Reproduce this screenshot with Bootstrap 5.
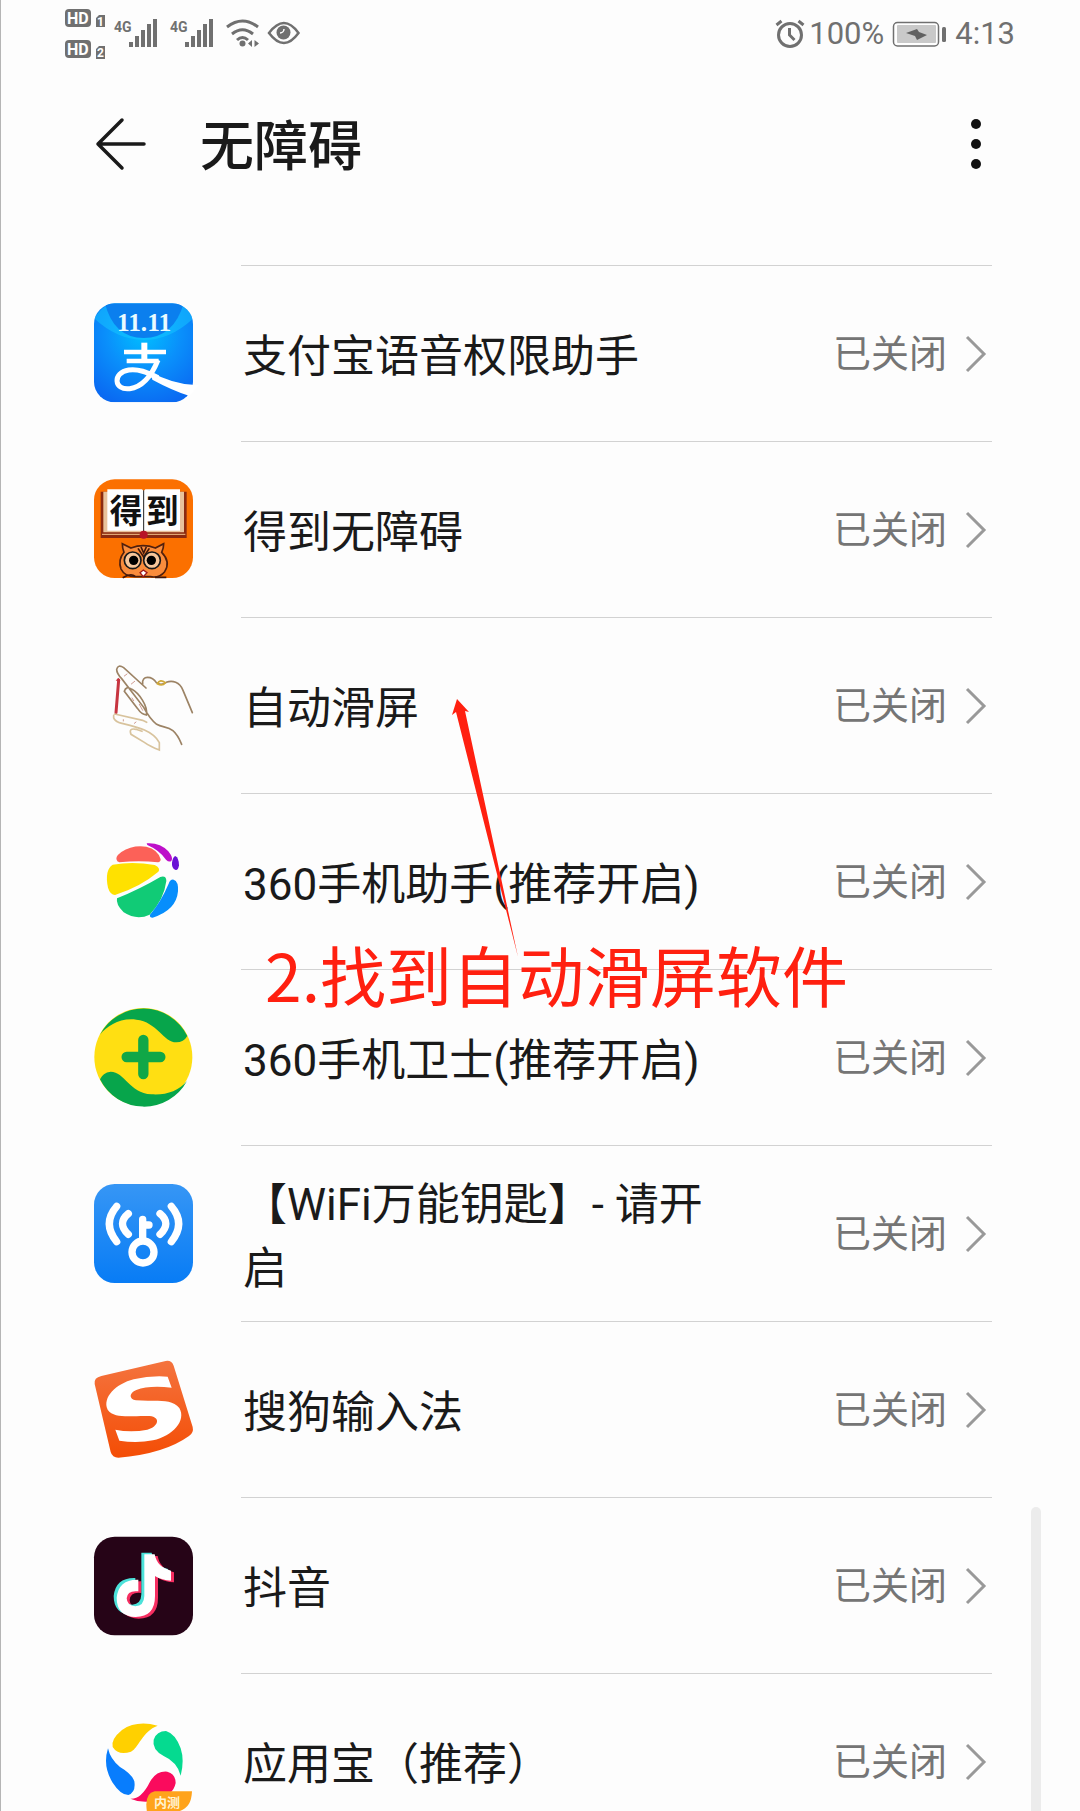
<!DOCTYPE html>
<html lang="zh-CN">
<head>
<meta charset="utf-8">
<meta name="viewport" content="width=device-width, initial-scale=1">
<title>无障碍</title>
<link href="https://cdn.jsdelivr.net/npm/bootstrap@5.3.0/dist/css/bootstrap.min.css" rel="stylesheet">
<style>
body { font-family: Roboto, "Noto Sans CJK SC", sans-serif; color: #1a1a1a; background: #fdfdfd; }
.screen { border-left: 1px solid #b5b5b5; }
.statusbar { height: 66px; padding: 0 65px 0 64px; color: #707070; font-size: 31px; line-height: 66px; }
.status-right { padding-top: 2px; }
.statusbar .clock { margin-left: 7px; }
.titlebar { height: 156px; padding: 0 87px 0 94px; }
.titlebar h1 { font-size: 54px; line-height: 80px; font-weight: 500; margin-left: 53px; padding-top: 8px; }
.titlebar .btn { line-height: 0; }
.services { margin-top: 43px; padding: 0 88px 0 93px; }
.service { height: 177px; margin-bottom: -1px; color: #1a1a1a; gap: 48px; }
.app-icon { width: 99px; height: 99px; overflow: visible; }
.service-body { border-top: 1px solid #d2d2d2; padding-left: 2px; }
.service-name { font-size: 44px; line-height: 64px; margin-right: 108px; padding-top: 5px; }
.service-state { font-size: 38px; line-height: 64px; color: #757575; gap: 18px; padding-right: 5px; }
.scroll-thumb { right: 39px; top: 1507px; bottom: 0; width: 10px; background: #ececec; border-radius: 5px 5px 0 0; }
.note-text { left: 264px; top: 925px; font: 66px/96px "Noto Sans CJK SC", sans-serif; color: #ff2010; }
.note-arrow { left: 440px; top: 690px; }
</style>
<script src="https://cdn.jsdelivr.net/npm/bootstrap@5.3.0/dist/js/bootstrap.bundle.min.js"></script>
</head>
<body>
<div class="screen position-relative vh-100 overflow-hidden">
  <div class="statusbar d-flex align-items-center justify-content-between">
    <svg width="240" height="66" viewBox="65 0 240 66" fill="#707070" font-family="Roboto, sans-serif" font-weight="700" role="img" aria-label="信号">
      <rect x="65" y="9" width="26" height="18" rx="4"/><rect x="65" y="40" width="26" height="18" rx="4"/>
      <g fill="#fff" font-size="16"><text x="67" y="24">HD</text><text x="67" y="55">HD</text></g>
      <path d="M96 18l3-3h6v12h-9zM96 49l3-3h6v13h-9z"/>
      <g fill="#fff" font-size="12"><text x="97" y="26">1</text><text x="97" y="57">2</text></g>
      <g id="bars"><text x="114" y="32" font-size="14">4G</text>
      <path d="M129 42h4v5h-4zM135 36h4v11h-4zM141 30h4v17h-4zM147 24h4v23h-4zM153 19h4v28h-4z"/></g>
      <use href="#bars" x="56"/>
      <g fill="none" stroke="#707070" stroke-width="3"><path d="M227 27q15.500-12 31 0M232 34q10.500-8.500 21 0M237 40q5.500-5 11 0"/>
      <path stroke-width="2.500" d="M269 33q15-20 29.500 0q-14.500 20-29.500 0z"/></g>
      <circle cx="242.500" cy="43.500" r="3"/><path d="M248 43.500l4-3.500v7zM259 43.500l-4.500-3.500v7z"/>
      <circle cx="283.500" cy="32.500" r="7"/><path d="M284 29a4 4 0 0 1-4 4" fill="none" stroke="#fff" stroke-width="1.500"/>
    </svg>
    <div class="status-right d-flex align-items-center">
      <svg class="me-1" width="30" height="30" viewBox="776 18 30 30" fill="none" stroke="#707070" stroke-width="3" aria-hidden="true"><circle cx="791" cy="34" r="11.500"/><path d="M790.500 27v7l5 5M777.500 24l5-4M804.500 24l-5-4"/></svg>
      <span>100%</span>
      <svg class="ms-2" width="56" height="28" viewBox="893 19 56 28" aria-hidden="true"><rect x="894.500" y="21.500" width="45" height="23.500" rx="4" fill="#fff" stroke="#707070" stroke-width="1.500"/><rect x="898" y="24" width="39" height="18" rx="1" fill="#c9c9c9"/><path d="M907 32l11-4 2 3 8 3-10 5-2-4z" fill="#606060"/><rect x="943" y="26" width="4" height="15" rx="1.500" fill="#707070"/></svg>
      <span class="clock">4:13</span>
    </div>
  </div>

  <header class="titlebar d-flex align-items-center">
    <button type="button" class="btn p-0 border-0" aria-label="返回"><svg width="52" height="54" fill="none" stroke="#1a1a1a" stroke-width="3.500" stroke-linecap="round" stroke-linejoin="round"><path d="M27 3L3 27l24 24M3 27h46"/></svg></button>
    <h1 class="mb-0 flex-grow-1">无障碍</h1>
    <button type="button" class="btn p-0 border-0" aria-label="更多"><svg width="34" height="54" fill="#111"><circle cx="17" cy="7" r="5"/><circle cx="17" cy="27" r="5"/><circle cx="17" cy="47" r="5"/></svg></button>
  </header>

  <svg class="d-none"><symbol id="chev" viewBox="0 0 22 38"><path d="M2 2l17 17L2 36" fill="none" stroke="#999" stroke-width="3"/></symbol></svg>

  <nav class="services d-flex flex-column" aria-label="服务">
    <a href="#" class="service d-flex align-items-center text-decoration-none">
      <svg class="app-icon flex-shrink-0" viewBox="42 42 297 297"><defs><radialGradient id="ali" cx=".5" cy=".3" r=".75"><stop offset="0" stop-color="#00c0ff"/><stop offset=".5" stop-color="#0a90fb"/><stop offset="1" stop-color="#0a6af2"/></radialGradient><clipPath id="sq"><rect x="42" y="40" width="297" height="297" rx="62"/></clipPath></defs>
      <g clip-path="url(#sq)"><path fill="url(#ali)" d="M42 40h297v297H42z"/><path fill="#15c8ff" d="M42 85Q80 30 120 40h150q50 0 70 45Q270 150 191 150T42 85z" opacity=".5"/><path fill="#0b7fee" d="M75 40h236q-30 104-120 104T75 40z"/></g>
      <text x="192" y="123" text-anchor="middle" font-family="Liberation Serif" font-weight="700" font-size="76" fill="#e9fbff">11.11</text>
      <path fill="none" stroke="#fff" stroke-width="13" d="M132 186h126M140 213h96"/><path fill="none" stroke="#fff" stroke-width="18" d="M193 158v52"/><path fill="none" stroke="#fff" stroke-width="15" d="M234 210q-32 79-85 86c-48 6-52-48-3-56 30-5 58 9 88 23"/><path fill="#fff" d="M212 246q66 36 127 38l18 1-28 33q-53-17-112-49z"/></svg>
      <div class="service-body align-self-stretch flex-grow-1 d-flex align-items-center justify-content-between"><span class="service-name">支付宝语音权限助手</span><span class="service-state d-flex align-items-center flex-shrink-0">已关闭<svg width="22" height="38"><use href="#chev"/></svg></span></div>
    </a>
    <a href="#" class="service d-flex align-items-center text-decoration-none">
      <svg class="app-icon flex-shrink-0" viewBox="42 45 297 297"><rect x="42" y="43" width="297" height="296" rx="62" fill="#fb7000"/>
      <path d="M62 80h258v139H62z" fill="#8b2a10"/><path d="M70 80h242v122H70z" fill="#e9c29b"/><path d="M82 73h104l5 5 5-5h104v124H82z" fill="#fff"/><path d="M191 76v125" stroke="#222" stroke-width="3"/><path d="M66 208h250" stroke="#f3c18a" stroke-width="3"/><circle cx="191" cy="209" r="12" fill="#b71327"/>
      <g font-family="Noto Sans CJK SC" font-weight="700" font-size="98" fill="#111"><text x="89" y="173">得</text><text x="198" y="173">到</text></g>
      <path d="M127 236l26 13q37-14 73 0l25-13q0 14-6 26 28 28 9 58-16 20-43 15h-40q-36 2-48-23-10-27 9-50-5-12-5-26z" fill="#f98c3c" stroke="#51200d" stroke-width="5"/><path d="M128 338q24-14 38-4M225 337h34M174 250l17 26 17-26M183 246l8 18 8-18" fill="none" stroke="#42180b" stroke-width="5"/>
      <g fill="#f7c69b" stroke="#191919" stroke-width="5"><circle cx="158" cy="286" r="25"/><circle cx="216" cy="286" r="25"/></g><circle cx="161" cy="286" r="14"/><circle cx="214" cy="286" r="14"/><path d="M180 323l10-8 11 8-11 12z" fill="#fff" stroke="#a01818" stroke-width="4"/></svg>
      <div class="service-body align-self-stretch flex-grow-1 d-flex align-items-center justify-content-between"><span class="service-name">得到无障碍</span><span class="service-state d-flex align-items-center flex-shrink-0">已关闭<svg width="22" height="38"><use href="#chev"/></svg></span></div>
    </a>
    <a href="#" class="service d-flex align-items-center text-decoration-none">
      <svg class="app-icon flex-shrink-0" viewBox="42 48 297 297" fill="none" stroke-width="5" stroke-linecap="round"><path d="M116 120l-8 98" stroke="#c73540" stroke-width="9"/><path d="M115 113l-8 9 14 0z" fill="#c73540"/>
      <g stroke="#9c8365"><path d="M198 144L131 83q-17-11-21 5 0 13 15 28l66 86q18 34 39 51c27 15 50-2 75 60M188 132c-4-28 29-24 41-4q14 10 30-1c18-7 40-1 50 24l28 67M133 154q5-18 23-6c20 11 49 50 43 77q-15-2-26-19z"/></g><path d="M232 131q8-15 24-3-9 12-24 3z" stroke="#d0a93a"/><path d="M101 226q-3 14 17 22c48 12 100 22 120 60v22q-28-11-45-23l-40-24q-8-20 15-15l18 6M104 222l84 19 12 6" stroke="#d8c39d"/><path d="M133 108l8-6M154 132l10-8M130 239v4M163 250l5-4M178 193l10 18M156 174l5 8" stroke="#cf9b91" stroke-width="3"/></svg>
      <div class="service-body align-self-stretch flex-grow-1 d-flex align-items-center justify-content-between"><span class="service-name">自动滑屏</span><span class="service-state d-flex align-items-center flex-shrink-0">已关闭<svg width="22" height="38"><use href="#chev"/></svg></span></div>
    </a>
    <a href="#" class="service d-flex align-items-center text-decoration-none">
      <svg class="app-icon flex-shrink-0" viewBox="42 38 297 297"><path fill="#fc6158" d="M112 126q-10-12 12-28 33-22 75-16 35 8 43 38 0 8-8 9-57-6-116 0z"/><path fill="#bd0fc9" d="M200 72q40-3 65 24 17 22 9 29-7 5-16-4Q239 93 202 77z"/><path fill="#6a12d5" d="M286 110q11 6 11 28-2 15-10 14-13-5-11-22 2-17 10-20z"/><path fill="#ffe100" d="M98 136q61-10 126 1 19 9 11 20-53 45-130 70-14 0-21-22-11-53 14-69z"/><path fill="#11cb76" d="M111 237q69-28 130-64 18-5 18 12-7 56-50 101-39 18-78-7-24-23-20-42z"/><path fill="#078efc" d="M281 181q15 5 13 35-5 57-76 79-10 0-8-9 32-37 56-93 5-14 15-12z"/></svg>
      <div class="service-body align-self-stretch flex-grow-1 d-flex align-items-center justify-content-between"><span class="service-name">360手机助手(推荐开启)</span><span class="service-state d-flex align-items-center flex-shrink-0">已关闭<svg width="22" height="38"><use href="#chev"/></svg></span></div>
    </a>
    <a href="#" class="service d-flex align-items-center text-decoration-none">
      <svg class="app-icon flex-shrink-0" viewBox="42 40 297 297"><circle cx="190" cy="187" r="147" fill="#ffdf12"/><path fill="#07a54b" d="M60 120A147 147 0 0 1 322 124q-11 19-33 19c-39 0-58-62-120-68-50-6-86 18-109 45zM60 254q8-20 32-23c42 0 55 63 122 68 45 3 81-10 107-40A147 147 0 0 1 60 254z"/><path d="M190 136v102M140 187h101" stroke="#10a747" stroke-width="31" stroke-linecap="round"/></svg>
      <div class="service-body align-self-stretch flex-grow-1 d-flex align-items-center justify-content-between"><span class="service-name">360手机卫士(推荐开启)</span><span class="service-state d-flex align-items-center flex-shrink-0">已关闭<svg width="22" height="38"><use href="#chev"/></svg></span></div>
    </a>
    <a href="#" class="service d-flex align-items-center text-decoration-none">
      <svg class="app-icon flex-shrink-0" viewBox="42 42 297 297"><defs><linearGradient id="wf" x2="0" y2="1"><stop stop-color="#3696f5"/><stop offset="1" stop-color="#087cf5"/></linearGradient></defs><rect x="42" y="42" width="297" height="297" rx="62" fill="url(#wf)"/><g fill="none" stroke="#fff" stroke-width="22" stroke-linecap="round"><path d="M110 109q-44 51 0 106M145 131q-35 29 0 62M240 131q35 29 0 62M274 109q44 51 0 106M188 148v62M194 165h13"/><circle cx="189" cy="246" r="33"/></g></svg>
      <div class="service-body align-self-stretch flex-grow-1 d-flex align-items-center justify-content-between"><span class="service-name">【WiFi万能钥匙】- 请开启</span><span class="service-state d-flex align-items-center flex-shrink-0">已关闭<svg width="22" height="38"><use href="#chev"/></svg></span></div>
    </a>
    <a href="#" class="service d-flex align-items-center text-decoration-none">
      <svg class="app-icon flex-shrink-0" viewBox="42 46 297 297"><defs><linearGradient id="sg" x2="0" y2="1"><stop stop-color="#f4733e"/><stop offset="1" stop-color="#f44d05"/></linearGradient></defs><path fill="url(#sg)" d="M64 94L257 49q18-3 24 14l57 184q4 17-11 27-75 54-212 65-18 0-23-17L44 118q-3-19 20-24z"/><path fill="#fff" d="M263 96l12 33q-68-8-106 7c-23 10-22 27-1 31 52 5 105-8 130 23 22 38-20 84-79 97q-48 9-101 1l-12-33q47 10 96 0c34-9 41-38 7-41-52-2-105 10-126-19-17-36 25-78 78-91q52-12 102-8z"/></svg>
      <div class="service-body align-self-stretch flex-grow-1 d-flex align-items-center justify-content-between"><span class="service-name">搜狗输入法</span><span class="service-state d-flex align-items-center flex-shrink-0">已关闭<svg width="22" height="38"><use href="#chev"/></svg></span></div>
    </a>
    <a href="#" class="service d-flex align-items-center text-decoration-none">
      <svg class="app-icon flex-shrink-0" viewBox="42 48 297 297"><defs><path id="note" d="M189 101h31q7 39 49 49v30q-27-1-48-14v60q0 62-58 63-57-2-57-58 6-56 65-54v35q-33-4-35 21 1 22 26 24 26-1 27-31z"/></defs><rect x="42" y="50" width="297" height="296" rx="62" fill="#260417"/><use href="#note" x="13" y="7" fill="#f52e61"/><use href="#note" x="-5" y="-3" fill="#4ce2da"/><use href="#note" x="4" y="2" fill="#fff"/></svg>
      <div class="service-body align-self-stretch flex-grow-1 d-flex align-items-center justify-content-between"><span class="service-name">抖音</span><span class="service-state d-flex align-items-center flex-shrink-0">已关闭<svg width="22" height="38"><use href="#chev"/></svg></span></div>
    </a>
    <a href="#" class="service d-flex align-items-center text-decoration-none">
      <svg class="app-icon flex-shrink-0" viewBox="42 65 297 297"><path fill="#ffd000" d="M233 106q-63-17-107 13-34 28-28 51 17 27 55 14c24-12 33-61 80-78z"/><path fill="#05da90" d="M221 148q9-26 37-26 28 8 44 52 12 37 0 82-10-41-51-59-36-20-30-49z"/><path fill="#087dfd" d="M84 174q-17 54 14 103 24 37 47 37 23-8 18-41-7-22-43-43-29-23-36-56z"/><path fill="#fa0b5d" d="M151 325q33 2 59-51 19-33 52-30 25 7 25 34-7 36-56 52-44 11-80-5z"/><path fill="#ffa31b" d="M224 303h112q-2 60-55 62h-80q-9-56 23-62z"/><text x="222" y="350" font-family="Noto Sans CJK SC" font-weight="700" font-size="39" fill="#fff3d2">内测</text></svg>
      <div class="service-body align-self-stretch flex-grow-1 d-flex align-items-center justify-content-between"><span class="service-name">应用宝（推荐）</span><span class="service-state d-flex align-items-center flex-shrink-0">已关闭<svg width="22" height="38"><use href="#chev"/></svg></span></div>
    </a>
  </nav>

  <svg class="note-arrow position-absolute pe-none" width="90" height="280" viewBox="440 690 90 280" aria-hidden="true"><path fill="#ff2010" d="M456 699L468 712L464 711L517 957L455 712L451 715z"/></svg>
  <div class="note-text position-absolute text-nowrap pe-none">2.找到自动滑屏软件</div>
  <div class="scroll-thumb position-absolute"></div>
</div>
</body>
</html>
